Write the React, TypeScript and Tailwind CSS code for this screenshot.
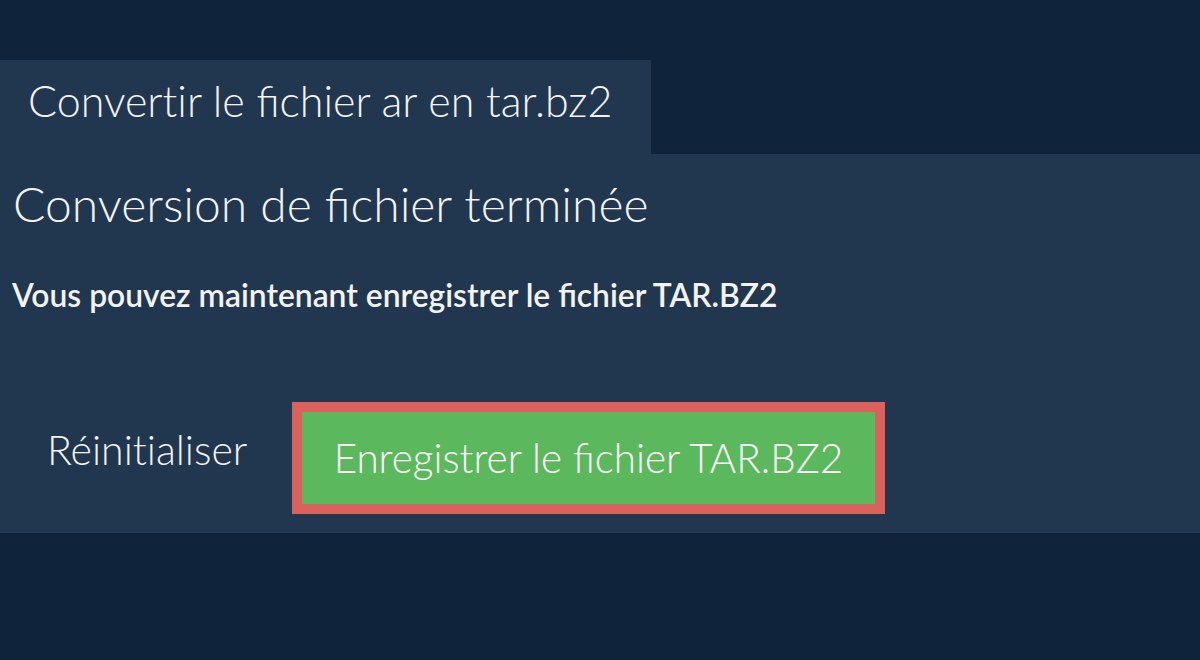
import React from "react";

export default function App() {
  return (
    <div className="w-[1200px] h-[660px] bg-[#0f243a] pt-[60px] text-[#f3f3f3]" style={{ fontFamily: "Lato, 'Open Sans', sans-serif" }}>
      <div className="w-[651px] h-[94px] bg-[#213750] pl-[28px] pt-[19px]">
        <div className="text-[43px] font-light leading-none whitespace-nowrap">
          Conver<span className="[font-variant-ligatures:no-common-ligatures_no-discretionary-ligatures_no-contextual]">ti</span>r le fichier ar en tar.bz2
        </div>
      </div>
      <div className="h-[379px] bg-[#213750] flex flex-col">
        <div className="pl-[13px] pt-[26px] text-[48px] font-light leading-none whitespace-nowrap">Conversion de fichier terminée</div>
        <div className="pl-[12px] pt-[52px] text-[31.8px] font-semibold leading-none whitespace-nowrap">Vous pouvez maintenant enregistrer le fichier TAR.BZ2</div>
        <div className="flex items-start mt-[90px]">
          <button className="ml-[47px] w-[245px] mt-[27px] text-left text-[41px] font-light leading-none whitespace-nowrap">
            Réini<span className="[font-variant-ligatures:no-common-ligatures_no-discretionary-ligatures_no-contextual]">ti</span>aliser
          </button>
          <button className="w-[593px] h-[112px] border-[10px] border-[#dc605c] bg-[#5cb85c] text-white text-[40.4px] font-light leading-none flex items-center justify-center whitespace-nowrap">Enregistrer le fichier TAR.BZ2</button>
        </div>
      </div>
    </div>
  );
}
